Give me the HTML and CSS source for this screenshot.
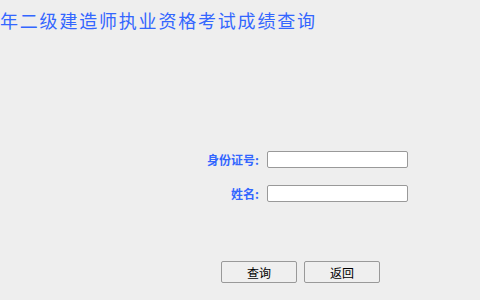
FILE: index.html
```html
<!DOCTYPE html>
<html lang="zh-CN">

<head>
    <meta charset="UTF-8">
    <title>二级建造师执业资格考试成绩查询</title>
    <link rel="stylesheet" href="styles.css">
</head>

<body>
    <h1 class="title">年二级建造师执业资格考试成绩查询</h1>

    <!-- Query form -->
    <form class="query-form" onsubmit="return false;">
        <label class="field-label" for="id-no">身份证号:</label>
        <input class="field-input" type="text" id="id-no">

        <label class="field-label" for="name">姓名:</label>
        <input class="field-input" type="text" id="name">
    </form>

    <div class="actions">
        <button class="btn" type="button">查询</button>
        <button class="btn" type="button">返回</button>
    </div>
</body>

</html>
```

FILE: styles.css
```css
body {
    margin: 0;
    background-color: #eeeeee;
    font-family: "Noto Sans CJK SC", "Noto Sans", sans-serif;
}

.title {
    margin: 0;
    padding: 8px 0;
    font-size: 18px;
    font-weight: normal;
    line-height: 24px;
    letter-spacing: 1.8px;
    color: #3366ff;
    white-space: nowrap;
}

.query-form {
    display: grid;
    grid-template-columns: 259px 141px;
    column-gap: 8px;
    row-gap: 17px;
    align-items: center;
    margin-top: 111px;
}

.field-label {
    text-align: right;
    font-size: 12px;
    font-weight: bold;
    color: #3366ff;
}

.field-input {
    box-sizing: border-box;
    width: 141px;
    height: 17px;
    margin: 0;
    padding: 0 3px;
    border: 1px solid #999999;
    border-radius: 2px;
    background-color: #ffffff;
}

.actions {
    display: flex;
    gap: 7px;
    margin-top: 59px;
    padding-left: 221px;
}

.btn {
    width: 76px;
    height: 22px;
    padding: 0;
    border: 1px solid #999999;
    border-radius: 2px;
    background-color: #efefef;
    font-family: "Noto Sans CJK SC", sans-serif;
    font-size: 12px;
    color: #000000;
}
```
